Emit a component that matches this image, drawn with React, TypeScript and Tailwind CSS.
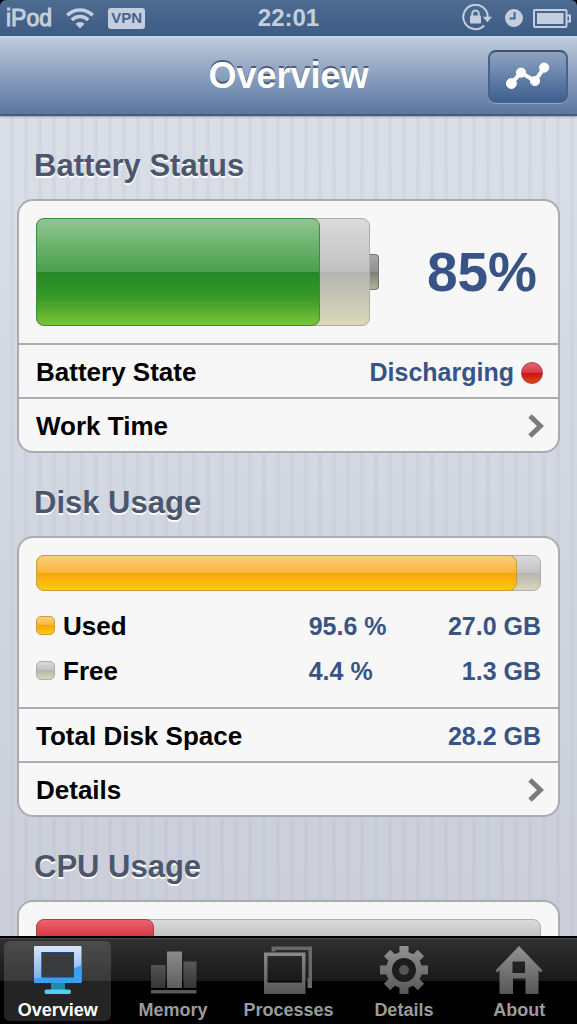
import type { ReactNode } from 'react';

// Glossy fills: light upper half, saturated lower half
const gloss = {
  green: 'border-[#3f8c41] bg-[linear-gradient(#90c691,#4a9e4c_50%,#218924_50%,#3a9a29_75%,#7cc435)]',
  orange: 'border-[#cf9c3d] bg-[linear-gradient(#fdcf7c,#f9b53c_50%,#f7a50c_50%,#fbcb0d)]',
  red: 'border-[#a8404b] bg-[linear-gradient(#ea6470,#d63640_50%,#cb0f14_50%,#e04a10)]',
  gray: 'border-[#adada9] bg-[linear-gradient(#dadada,#c1c1c1_50%,#b4b4b2_50%,#dad9b8)]',
};

const StatusBar = () => (
  <div className="bg-black">
    <div className="grid h-9 grid-cols-3 items-center rounded-t-md bg-linear-to-b from-[#4e6b90] to-[#3d5b84] px-[6px] text-[#c3cfdf]">
      <div className="flex items-center">
        <span className="text-[23px] leading-8 [-webkit-text-stroke:1px_currentColor]">iPod</span>
        <svg className="ml-[14px] h-[22px] w-7" viewBox="0 0 28 22" fill="none" stroke="currentColor" strokeWidth="3.6">
          <path d="M1.3 8.2a18 18 0 0 1 25.4 0" />
          <path d="M5.8 12.9a11.6 11.6 0 0 1 16.4 0" />
          <path d="M14 21.5l-4.6-4.7a6.5 6.5 0 0 1 9.2 0z" fill="currentColor" stroke="none" />
        </svg>
        <span className="ml-[14px] flex h-[21px] w-[37px] items-center justify-center rounded-[3px] bg-[#c3cfdf] text-[15px] leading-5 font-bold text-[#46638a]">
          VPN
        </span>
      </div>
      <time className="text-center text-2xl font-bold">22:01</time>
      <div className="flex items-center justify-end">
        <svg className="h-7 w-8" viewBox="0 0 32 28" fill="none" stroke="currentColor" strokeWidth="2">
          <path d="M23.2 21.5A12.2 12.2 0 1 1 26.7 13" />
          <path d="M21.8 12.8h9.2l-4.6 5.4z" fill="currentColor" stroke="none" />
          <rect x="9" y="11.5" width="11" height="8" rx="1" fill="currentColor" stroke="none" />
          <path d="M11.2 12V9.700a3.3 3.3 0 0 1 6.6 0V12" />
        </svg>
        <svg className="ml-3 h-[18px] w-[18px]" viewBox="0 0 18 18">
          <circle cx="9" cy="9" r="9" fill="currentColor" />
          <path d="M9.6 3v6.4H4.6" fill="none" stroke="#46638a" strokeWidth="2" />
        </svg>
        <svg className="ml-[10px] h-[19px] w-[38px]" viewBox="0 0 38 19" fill="none" stroke="currentColor" strokeWidth="2">
          <rect x="1" y="1" width="32.5" height="17" rx="1" />
          <rect x="4" y="4" width="26.5" height="11" fill="currentColor" stroke="none" />
          <path d="M34 6.5h3v6h-3" />
        </svg>
      </div>
    </div>
  </div>
);

const NavBar = () => (
  <header className="relative z-10 grid h-20 grid-cols-[1fr_auto_1fr] items-center border-t-2 border-b-2 border-t-[#cbd6e5] border-b-[#415b83] bg-linear-to-b from-[#bccadb] via-[#8b9fbe] to-[#5a779f] shadow-[0_1px_2px_rgba(0,0,0,0.3)]">
    <h1 className="col-start-2 text-4xl font-bold text-white [text-shadow:0_-2px_0_rgba(50,60,80,0.7)]">Overview</h1>
    <button
      type="button"
      aria-label="Charts"
      className="mr-[9px] flex h-[53px] w-20 items-center justify-center justify-self-end rounded-lg border-2 border-[#4a618a] border-t-[#3f4f6b] bg-linear-to-b from-[#8fa3c1] to-[#3f6090] shadow-[0_1px_0_rgba(255,255,255,0.3)]"
    >
      <svg className="h-7 w-11" viewBox="0 0 44 28" fill="white" stroke="white">
        <path d="M5.4 21.500L15 10.600L29 19L38.2 5.600" fill="none" strokeWidth="4" />
        <circle cx="5.400" cy="21.500" r="5" />
        <circle cx="15" cy="10.600" r="4.600" />
        <circle cx="29" cy="19" r="4.600" />
        <circle cx="38.200" cy="5.600" r="4.600" />
      </svg>
    </button>
  </header>
);

const Section = ({ title, children }: { title: string; children: ReactNode }) => (
  <section>
    <h2 className="flex h-[83px] items-center pt-4 pl-[17px] text-[31px] leading-9 font-bold text-[#4c566c] [text-shadow:0_2px_0_#fff]">
      {title}
    </h2>
    <div className="rounded-2xl border-2 border-[#abacaf] bg-[#f7f7f7]">{children}</div>
  </section>
);

const Row = ({ label, children }: { label: string; children: ReactNode }) => (
  <div className="flex h-[54px] items-center justify-between border-t-2 border-[#abacaf] px-[17px] pt-[2px] text-[26px] font-bold">
    <span>{label}</span>
    <span className="flex items-center pt-[2px] text-[25px] text-[#385487]">{children}</span>
  </div>
);

const LinkRow = ({ label }: { label: string }) => (
  <button
    type="button"
    className="flex h-[54px] w-full items-center justify-between border-t-2 border-[#abacaf] pt-[2px] pr-[14px] pl-[17px] text-[26px] font-bold"
  >
    {label}
    <svg className="h-6 w-4" viewBox="0 0 16 24" fill="none" stroke="#7b7b7b" strokeWidth="5">
      <path d="M2 2l10.5 10L2 22" />
    </svg>
  </button>
);

const UsageBar = ({ value, fill }: { value: number; fill: string }) => (
  <div className={`h-9 rounded-lg border ${gloss.gray}`}>
    <div className={`-m-px h-9 rounded-lg border ${fill}`} style={{ width: `${value}%` }} />
  </div>
);

const disk = [
  { name: 'Used', percent: '95.6 %', size: '27.0 GB', color: gloss.orange },
  { name: 'Free', percent: '4.4 %', size: '1.3 GB', color: gloss.gray },
];

const tabs = [
  {
    name: 'Overview',
    icon: (
      <>
        <path fillRule="evenodd" fill="url(#screen)" d="M1 0h45.500a1 1 0 0 1 1 1v35a1 1 0 0 1-1 1H1a1 1 0 0 1-1-1V1a1 1 0 0 1 1-1zM7.500 6v25.500H40V6z" />
        <path d="M40 22q4-1 7.500-3V36a1 1 0 0 1-1 1H1a1 1 0 0 1-1-1v-3.500q4 0 7.500-1H40z" fill="#3a9ff0" />
        <rect x="8" y="6.500" width="31.500" height="24.500" fill="#393b3d" stroke="#1d477e" />
        <path d="M17 37h14v7H17z" fill="#1c8da9" />
        <rect x="10.500" y="43.500" width="26.500" height="4.500" rx="2" fill="#53cdf3" />
      </>
    ),
  },
  {
    name: 'Memory',
    icon: (
      <>
        <path fill="url(#dim)" d="M2 19h14.500v23H2zM34.500 15.500H47.500V42h-13z" />
        <path fill="url(#metal)" d="M18 5.500h15V42H18z" />
        <path fill="#595959" d="M2 44h45.500v3.500H2z" />
      </>
    ),
  },
  {
    name: 'Processes',
    icon: (
      <>
        <path fill="#696969" d="M7.500.5H48v41.500h-4.500V32h1V4h-33v1.500h-4z" />
        <path fillRule="evenodd" fill="url(#metal)" d="M0 6.500h41.500V48H0zM3.500 10v26.500H38V10z" />
      </>
    ),
  },
  {
    name: 'Details',
    icon: (
      <>
        <path
          fill="url(#metal)"
          d="M19.500 0h9v6.300l4.700 2 4.500-4.500 6.400 6.400-4.500 4.500 2 4.800H48v9h-6.400l-2 4.800 4.500 4.500-6.400 6.400-4.500-4.500-4.700 2V48h-9v-6.300l-4.700-2-4.500 4.500-6.400-6.400 4.500-4.500-2-4.800H0v-9h6.400l2-4.800-4.500-4.500 6.400-6.400 4.500 4.500 4.700-2z"
        />
        <circle cx="24" cy="24" r="12" fill="#1c1c1c" />
        <circle cx="24" cy="24" r="5" fill="#555" />
      </>
    ),
  },
  {
    name: 'About',
    icon: (
      <path
        fillRule="evenodd"
        fill="url(#metal)"
        d="M24 0L47.500 24.500l-1.500 2-2.500-2V48H30.500V32.500H18V48H4.500V24.500l-2.500 2L.5 24.500zM17.500 15.500V27h12.500V15.500z"
      />
    ),
  },
];

const TabBar = () => (
  <nav className="z-10 grid h-[88px] shrink-0 grid-cols-5 border-t-2 border-black bg-[linear-gradient(#4a4a4a_1px,#303030_1px,#191919_43px,#000_43px)] pt-[3px] pb-[3px]">
    {tabs.map((tab, i) => (
      <button
        key={tab.name}
        type="button"
        className={`mx-1 flex flex-col items-center rounded-md pt-[5px] text-lg leading-5 font-bold ${
          i === 0 ? 'bg-white/14 text-white' : 'text-[#9b9b9b]'
        }`}
      >
        <svg className="mb-[6px] h-12 w-12 shrink-0" viewBox="0 0 48 48">
          {tab.icon}
        </svg>
        {tab.name}
      </button>
    ))}
  </nav>
);

// Gradients shared by the tab icons
const IconGradients = () => (
  <svg className="absolute h-0 w-0" aria-hidden="true">
    <defs>
      <linearGradient id="metal" gradientUnits="userSpaceOnUse" x1="0" y1="0" x2="0" y2="48">
        <stop offset="0" stopColor="#929292" />
        <stop offset="1" stopColor="#575757" />
      </linearGradient>
      <linearGradient id="dim" gradientUnits="userSpaceOnUse" x1="0" y1="14" x2="0" y2="42">
        <stop offset="0" stopColor="#5b5b5b" />
        <stop offset="1" stopColor="#353535" />
      </linearGradient>
      <linearGradient id="screen" x1="0" y1="0" x2="0" y2="1">
        <stop offset="0" stopColor="#dbe6fb" />
        <stop offset="1" stopColor="#6aa9ee" />
      </linearGradient>
    </defs>
  </svg>
);

export default function App() {
  return (
    <div className="flex h-screen flex-col overflow-hidden font-['Liberation_Sans',Arial,sans-serif] text-black">
      <IconGradients />
      <StatusBar />
      <NavBar />

      <main className="min-h-0 flex-1 overflow-hidden bg-[repeating-linear-gradient(90deg,transparent_0_10px,rgba(170,182,208,0.16)_10px_14px),linear-gradient(#d9dee7,#cbced9)] px-[17px]">
        <Section title="Battery Status">
          <div className="flex items-center p-[17px]">
            <div className={`h-[108px] flex-1 rounded-lg border ${gloss.gray}`}>
              <div className={`-m-px h-[108px] rounded-lg border ${gloss.green}`} style={{ width: '85.4%' }} />
            </div>
            <div className="h-9 w-[9px] rounded-r border border-l-0 border-[#77776f] bg-[linear-gradient(#a9a9a9,#8f8f8f_50%,#7c7c7a_50%,#b3b295)]" />
            <div className="w-[162px] pr-1 text-right text-[55px] leading-[60px] font-bold text-[#385487]">85%</div>
          </div>
          <Row label="Battery State">
            Discharging
            <span className={`-mr-[2px] ml-[7px] h-[22px] w-[22px] rounded-full border ${gloss.red}`} />
          </Row>
          <LinkRow label="Work Time" />
        </Section>

        <Section title="Disk Usage">
          <div className="px-[17px] pt-[17px] pb-[14px]">
            <UsageBar value={95.6} fill={gloss.orange} />
            <table className="mt-3 w-full text-[25px] font-bold text-[#385487]">
              <tbody>
                {disk.map((d) => (
                  <tr key={d.name} className="h-[45px]">
                    <th scope="row" className="w-[54%] p-0 text-left text-[26px] leading-8 text-black">
                      <span className="flex items-center gap-2">
                        <span className={`h-[19px] w-[19px] rounded-[5px] border ${d.color}`} />
                        {d.name}
                      </span>
                    </th>
                    <td className="p-0 pt-[2px]">{d.percent}</td>
                    <td className="p-0 pt-[2px] text-right">{d.size}</td>
                  </tr>
                ))}
              </tbody>
            </table>
          </div>
          <Row label="Total Disk Space">28.2 GB</Row>
          <LinkRow label="Details" />
        </Section>

        <Section title="CPU Usage">
          <div className="p-[17px]">
            <UsageBar value={23.4} fill={gloss.red} />
          </div>
        </Section>
      </main>

      <TabBar />
    </div>
  );
}
